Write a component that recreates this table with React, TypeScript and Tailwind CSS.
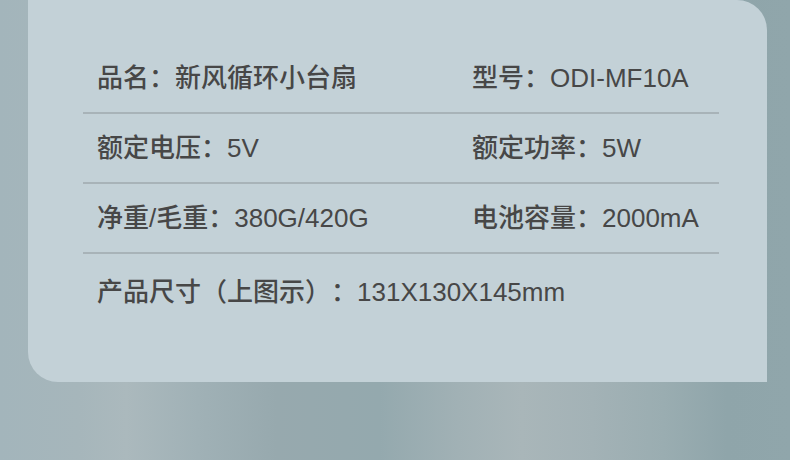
import React from "react";

const rows: [string, string][] = [
  ["品名：新风循环小台扇", "型号：ODI-MF10A"],
  ["额定电压：5V", "额定功率：5W"],
  ["净重/毛重：380G/420G", "电池容量：2000mA"],
];

export default function App() {
  return (
    <div
      className="w-[790px] h-[460px] overflow-hidden bg-[linear-gradient(90deg,#a3b5bb_0%,#a6b6bb_10%,#abb9bd_16%,#a0b1b6_25%,#97a9ae_35%,#94a9ae_48%,#a1b1b5_58%,#a9b6b9_66%,#a3b2b6_75%,#9aadb1_84%,#8fa5aa_92%,#90a6ab_100%)] [text-spacing-trim:space-all]"
      style={{ fontFamily: '"Liberation Sans", "Noto Sans CJK SC", sans-serif' }}
    >
      <div className="ml-[28px] w-[739px] h-[382px] bg-[#c3d1d7] rounded-tr-[30px] rounded-bl-[30px] pt-[44px] pl-[55px] pr-[48px]">
        {rows.map(([a, b], i) => (
          <div key={i}>
            <div className="h-[68px] flex items-center pl-[14px] text-[26px] text-[#474747] font-medium leading-none">
              <div className="w-[375px] whitespace-nowrap">{a}</div>
              <div className="whitespace-nowrap">{b}</div>
            </div>
            <div className="h-[2px] bg-[#a8b3b8]" />
          </div>
        ))}
        <div className="h-[76px] flex items-center pl-[14px] text-[26px] text-[#474747] font-medium leading-none whitespace-nowrap">
          产品尺寸（上图示）：131X130X145mm
        </div>
      </div>
    </div>
  );
}
